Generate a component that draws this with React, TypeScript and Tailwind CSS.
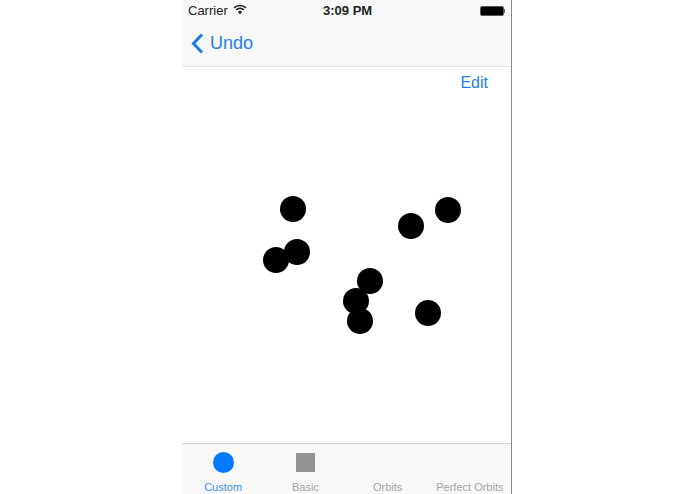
const dots = [
  [292.7, 209],
  [447.7, 210],
  [411, 226.3],
  [296.7, 251.7],
  [275.7, 260.3],
  [370, 280.5],
  [356, 301],
  [360, 320.7],
  [428, 313],
]

const tabs = [
  { label: 'Custom', color: 'text-[#3f8ce8]', icon: <div className="h-[21px] w-[21px] rounded-full bg-[#007aff]" /> },
  { label: 'Basic', color: 'text-[#a3a3a3]', icon: <div className="h-[19px] w-[19px] bg-[#929292]" /> },
  { label: 'Orbits', color: 'text-[#a3a3a3]', icon: null },
  { label: 'Perfect Orbits', color: 'text-[#a3a3a3]', icon: null },
]

export default function App() {
  return (
    <div className="h-[494px] w-[695px] overflow-hidden bg-white font-['Liberation_Sans',sans-serif]">
      <div className="ml-[182px] flex h-full w-[330px] flex-col border-r border-[#8a8a8a]">
        {/* Status + nav bar */}
        <div className="h-[67px] shrink-0 border-b border-[#dfdfdf] bg-[#f8f8f8]">
          <div className="flex h-[21px] items-center justify-between pl-[6px] pr-[6px] text-[13px] text-[#222]">
            <div className="flex items-center gap-[5px]">
              <span>Carrier</span>
              <svg width="14" height="11" viewBox="0 0 14 11" className="mb-[2px]">
                <path d="M1 3.9a8.6 8.6 0 0 1 12 0M3.1 6a5.6 5.6 0 0 1 7.8 0" fill="none" stroke="#222" strokeWidth="1.6" />
                <path d="M4.9 7.9a3 3 0 0 1 4.2 0L7 10.2z" fill="#222" />
              </svg>
            </div>
            <span className="absolute left-[323px] font-bold">3:09 PM</span>
            <div className="flex items-center">
              <div className="h-[10px] w-[24px] rounded-[2px] border border-[#555] bg-black" />
              <div className="h-[4px] w-[1.5px] bg-[#666]" />
            </div>
          </div>
          <div className="flex h-[45px] items-center pl-[9px] text-[#1f7fe6]">
            <svg width="13" height="21" viewBox="0 0 13 21">
              <path d="M11 1.5 2.5 10.5 11 19.5" fill="none" stroke="#1a7de8" strokeWidth="3" />
            </svg>
            <span className="ml-[6px] text-[18px]">Undo</span>
          </div>
        </div>

        {/* Canvas */}
        <div className="flex flex-1 justify-end pr-[23px] pt-[6px]">
          <span className="h-fit text-[16px] leading-[20px] text-[#1f7fe6]">Edit</span>
        </div>
        {dots.map(([x, y], i) => (
          <div
            key={i}
            className="absolute h-[26px] w-[26px] rounded-full bg-black"
            style={{ left: x - 13, top: y - 13 }}
          />
        ))}

        {/* Tab bar */}
        <div className="grid h-[51px] shrink-0 grid-cols-4 border-t border-[#d4d4d4] bg-[#f8f8f8]">
          {tabs.map((t) => (
            <div key={t.label} className="flex flex-col items-center">
              <div className="flex h-[37px] items-center">{t.icon}</div>
              <span className={`whitespace-nowrap text-[11px] leading-[13px] ${t.color}`}>{t.label}</span>
            </div>
          ))}
        </div>
      </div>
    </div>
  )
}
